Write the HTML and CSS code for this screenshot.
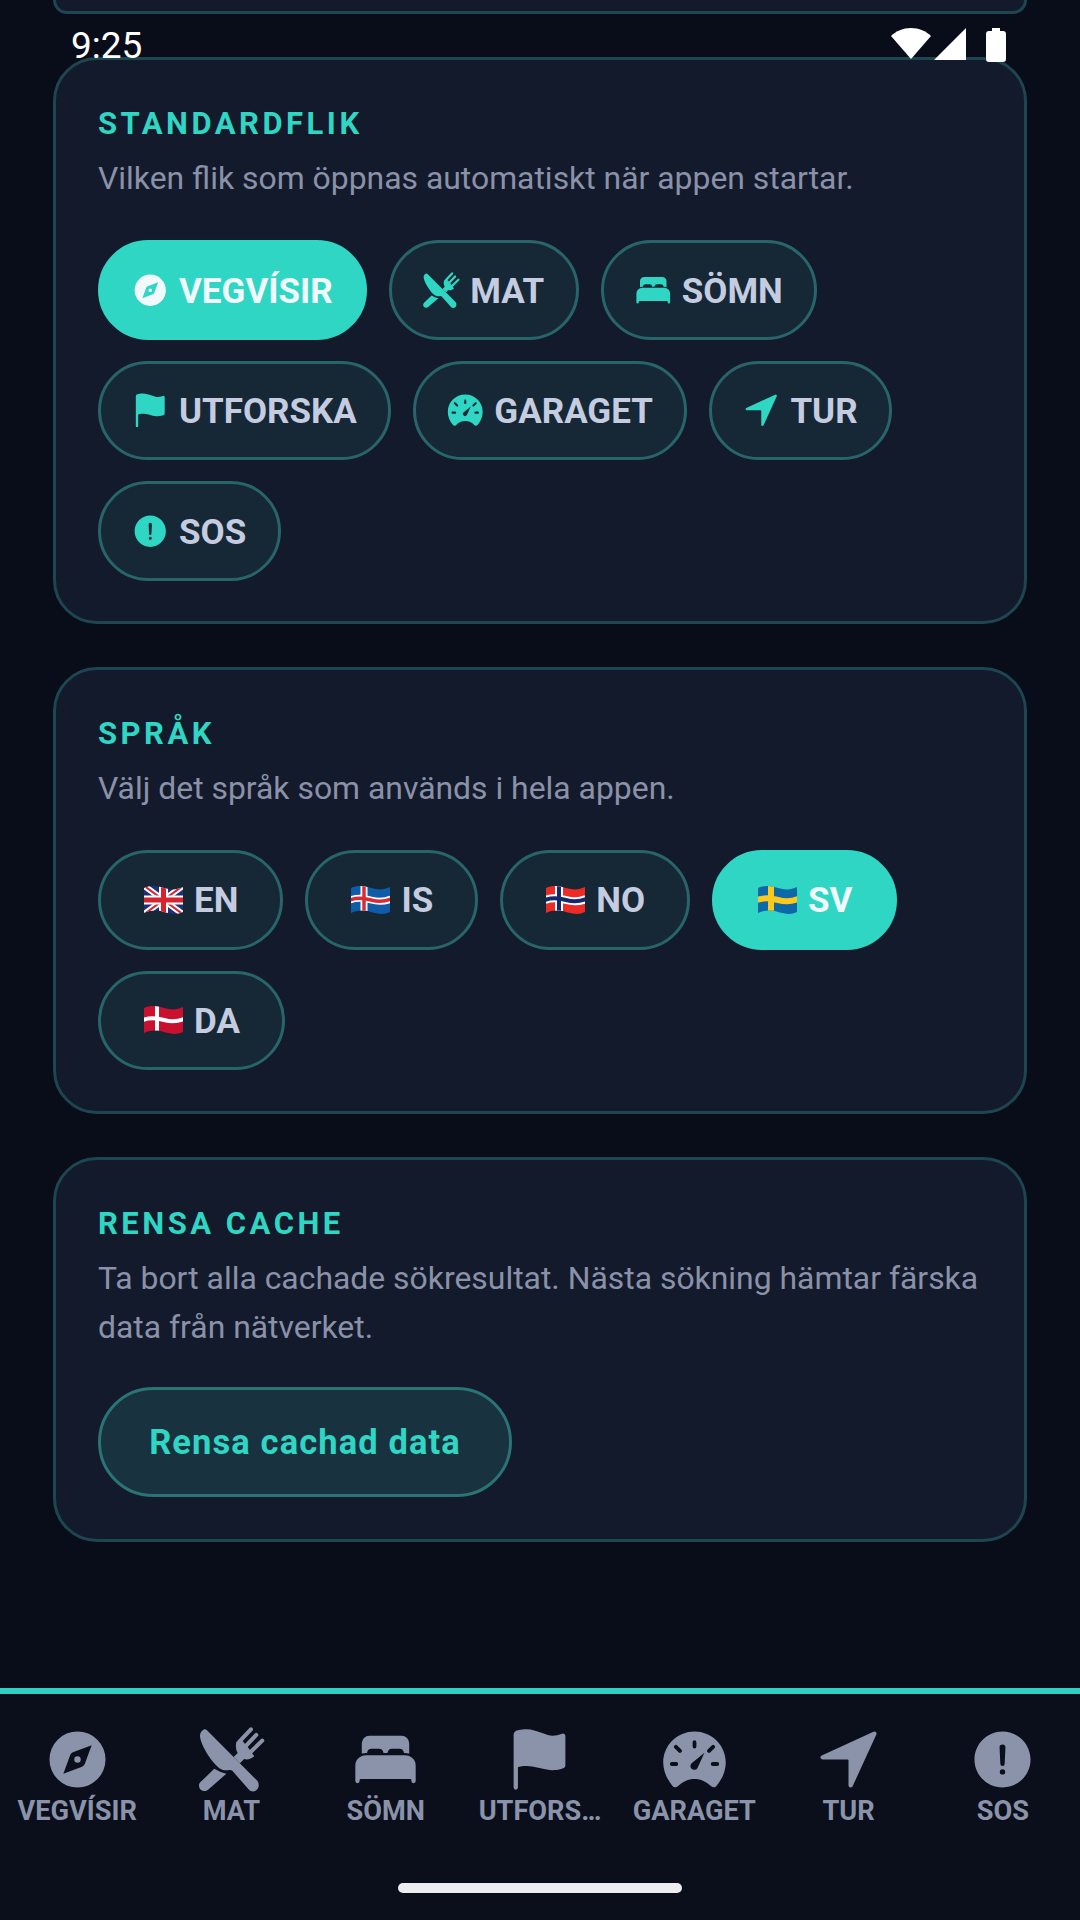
FILE: index.html
```html
<!DOCTYPE html>
<html lang="sv">
<head>
<meta charset="UTF-8">
<meta name="viewport" content="width=device-width, initial-scale=1.0">
<title>Inställningar</title>
<link rel="stylesheet" href="styles.css">
</head>
<body>
<!-- icon and flag sprites -->
<svg class="sprites" aria-hidden="true">
  <defs>
    <clipPath id="wave"><path d="M1 3C8 0 14 1 21 3S34 5 40 2V27C34 30 28 29 21 27S8 25 1 28Z"/></clipPath>
  </defs>
  <symbol id="i-compass" viewBox="0 0 512 512"><path fill-rule="evenodd" d="M256 48a208 208 0 1 0 0 416 208 208 0 0 0 0-416zM361 151L310 290Q304 304 290 310L151 361L202 222Q208 208 222 202ZM256 232a24 24 0 1 0 0 48 24 24 0 0 0 0-48z"/></symbol>
  <symbol id="i-food" viewBox="0 0 512 512">
    <path d="M46 36c8-6 20-5 28 3L446 412c16 18 16 48 0 66-16 18-44 20-60 2L262 340c-6-6-14-8-22-6-22 6-50 2-74-14C100 270 24 140 22 80c0-18 10-34 24-44z"/>
    <path d="M128 325Q172 352 218 362L82 480c-16 14-44 12-58-4-14-16-12-40 4-54z"/>
    <path d="M292 125C284 165 292 190 302 208L272 238L318 284L350 252C372 262 405 250 425 232L382 170L332 112Z"/>
    <path d="M316 122L400 32M356 162L440 74M396 202L484 116" fill="none" stroke="currentColor" stroke-width="30" stroke-linecap="round"/>
  </symbol>
  <symbol id="i-bed" viewBox="0 0 512 512"><path d="M432 230.7a79.44 79.44 0 0 0-32-6.7H112a79.51 79.51 0 0 0-32 6.69A80.09 80.09 0 0 0 32 304v112a16 16 0 0 0 32 0v-8a8.1 8.1 0 0 1 8-8h368a8.1 8.1 0 0 1 8 8v8a16 16 0 0 0 32 0V304a80.09 80.09 0 0 0-48-73.3zM376 80H136a56 56 0 0 0-56 56v72a4 4 0 0 0 5.12 3.84A95.5 95.5 0 0 1 112 208h4.23a4 4 0 0 0 4-3.55A32 32 0 0 1 152 176h56a32 32 0 0 1 31.8 28.45 4 4 0 0 0 4 3.55h24.46a4 4 0 0 0 4-3.55A32 32 0 0 1 304 176h56a32 32 0 0 1 31.8 28.45 4 4 0 0 0 4 3.55h4.23a95.51 95.51 0 0 1 26.85 3.84A4 4 0 0 0 432 208v-72a56 56 0 0 0-56-56z"/></symbol>
  <symbol id="i-flag" viewBox="0 0 512 512"><path d="M80 480a16 16 0 0 1-16-16V68.13a24 24 0 0 1 11.9-20.72C88 40.38 112.38 32 160 32c37.21 0 78.83 14.71 115.55 27.68C305.12 70.13 333.05 80 352 80a183.84 183.84 0 0 0 71-14.5 18 18 0 0 1 25 16.58v219.36a20 20 0 0 1-12 18.31c-8.71 3.81-40.51 16.25-84 16.25-24.14 0-54.38-7.14-86.39-14.71C229.63 312.79 192.43 304 160 304c-36.87 0-55.74 5.58-64 9.11V464a16 16 0 0 1-16 16z"/></symbol>
  <symbol id="i-gauge" viewBox="0 0 512 512"><path fill-rule="evenodd" d="M256 48C128 48 24 150 24 278C24 340 50 400 90 448C102 464 118 466 132 454C168 420 210 400 256 400C302 400 344 420 380 454C394 466 410 464 422 448C462 400 488 340 488 278C488 150 384 48 256 48ZM88 274h32a15 15 0 0 1 0 30h-32a15 15 0 0 1 0-30zM392 274h32a15 15 0 0 1 0 30h-32a15 15 0 0 1 0-30zM242 128a14 14 0 0 1 28 0v32a14 14 0 0 1-28 0zM108 172a14 14 0 0 1 20-20l30 30a14 14 0 0 1-20 20zM384 152a14 14 0 0 1 20 20l-30 30a14 14 0 0 1-20-20zM330 205L277 320a28 28 0 1 1-40-38Z"/></symbol>
  <symbol id="i-nav" viewBox="0 0 512 512"><path d="M272 464a16 16 0 0 1-16-16.42V264.13a8 8 0 0 0-8-8H64.41a16.31 16.31 0 0 1-15.49-10.65 16 16 0 0 1 8.41-19.87l384-176.15a16 16 0 0 1 21.22 21.19l-176 384A16 16 0 0 1 272 464z"/></symbol>
  <symbol id="i-alert" viewBox="0 0 512 512"><path fill-rule="evenodd" d="M256 48C141.31 48 48 141.31 48 256s93.31 208 208 208 208-93.31 208-208S370.69 48 256 48zm0 319.91a20 20 0 1 1 20-20 20 20 0 0 1-20 20zm21.72-201.15l-5.74 122a16 16 0 0 1-32 0l-5.74-121.94v-.05a21.74 21.74 0 1 1 43.44 0z"/></symbol>

  <symbol id="f-en" viewBox="0 0 41 30"><g clip-path="url(#wave)">
    <rect width="41" height="30" fill="#1f2f78"/>
    <path d="M0 0L41 30M41 0L0 30" stroke="#fff" stroke-width="6"/>
    <path d="M0 0L41 30M41 0L0 30" stroke="#d8232f" stroke-width="2"/>
    <path d="M20.5 0V30M0 15H41" stroke="#fff" stroke-width="9"/>
    <path d="M20.5 0V30M0 15H41" stroke="#d8232f" stroke-width="5"/>
  </g></symbol>
  <symbol id="f-is" viewBox="0 0 41 30"><g clip-path="url(#wave)">
    <rect width="41" height="30" fill="#0f5ca8"/>
    <path d="M14 0V30M0 15C8 12 14 13 21 15S34 17 41 14" fill="none" stroke="#fff" stroke-width="7"/>
    <path d="M14 0V30M0 15C8 12 14 13 21 15S34 17 41 14" fill="none" stroke="#dc2a35" stroke-width="3.5"/>
  </g></symbol>
  <symbol id="f-no" viewBox="0 0 41 30"><g clip-path="url(#wave)">
    <rect width="41" height="30" fill="#ec2b27"/>
    <path d="M14 0V30M0 15C8 12 14 13 21 15S34 17 41 14" fill="none" stroke="#fff" stroke-width="8"/>
    <path d="M14 0V30M0 15C8 12 14 13 21 15S34 17 41 14" fill="none" stroke="#14296b" stroke-width="4"/>
  </g></symbol>
  <symbol id="f-sv" viewBox="0 0 41 30"><g clip-path="url(#wave)">
    <rect width="41" height="30" fill="#0c68a6"/>
    <path d="M14 0V30M0 15C8 12 14 13 21 15S34 17 41 14" fill="none" stroke="#fcc81e" stroke-width="6"/>
  </g></symbol>
  <symbol id="f-da" viewBox="0 0 41 30"><g clip-path="url(#wave)">
    <rect width="41" height="30" fill="#c9112f"/>
    <path d="M14 0V30M0 15C8 12 14 13 21 15S34 17 41 14" fill="none" stroke="#fff" stroke-width="4"/>
  </g></symbol>
</svg>

<div class="screen">
  <!-- status bar sits over the scrolled content -->
  <div class="statusbar">
    <span class="clock">9:25</span>
    <span class="status-icons">
      <svg class="st-wifi" viewBox="0 0 40 31"><path d="M20 31L0 8C5 3 12 0 20 0S35 3 40 8Z"/></svg>
      <svg class="st-signal" viewBox="0 0 32 32"><path d="M32 0V32H0Z"/></svg>
      <svg class="st-battery" viewBox="0 0 20 34"><path d="M6 0h8v3h3a3 3 0 0 1 3 3v25a3 3 0 0 1-3 3H3a3 3 0 0 1-3-3V6a3 3 0 0 1 3-3h3Z"/></svg>
    </span>
  </div>

  <main class="content">
    <div class="card card-stub"></div>

    <section class="card">
      <h2 class="card-title">STANDARDFLIK</h2>
      <p class="card-text">Vilken flik som öppnas automatiskt när appen startar.</p>
      <div class="chips">
        <div class="chip chip-active"><svg class="chip-icon"><use href="#i-compass"/></svg>VEGVÍSIR</div>
        <div class="chip"><svg class="chip-icon"><use href="#i-food"/></svg>MAT</div>
        <div class="chip"><svg class="chip-icon"><use href="#i-bed"/></svg>SÖMN</div>
        <div class="chip"><svg class="chip-icon"><use href="#i-flag"/></svg>UTFORSKA</div>
        <div class="chip"><svg class="chip-icon"><use href="#i-gauge"/></svg>GARAGET</div>
        <div class="chip"><svg class="chip-icon"><use href="#i-nav"/></svg>TUR</div>
        <div class="chip"><svg class="chip-icon"><use href="#i-alert"/></svg>SOS</div>
      </div>
    </section>

    <section class="card">
      <h2 class="card-title">SPRÅK</h2>
      <p class="card-text">Välj det språk som används i hela appen.</p>
      <div class="chips">
        <div class="chip chip-lang"><svg class="flag"><use href="#f-en"/></svg>EN</div>
        <div class="chip chip-lang"><svg class="flag"><use href="#f-is"/></svg>IS</div>
        <div class="chip chip-lang"><svg class="flag"><use href="#f-no"/></svg>NO</div>
        <div class="chip chip-lang chip-active"><svg class="flag"><use href="#f-sv"/></svg>SV</div>
        <div class="chip chip-lang"><svg class="flag"><use href="#f-da"/></svg>DA</div>
      </div>
    </section>

    <section class="card">
      <h2 class="card-title">RENSA CACHE</h2>
      <p class="card-text">Ta bort alla cachade sökresultat. Nästa sökning hämtar färska data från nätverket.</p>
      <div class="clear-btn">Rensa cachad data</div>
    </section>
  </main>

  <nav class="tabbar">
    <div class="tab"><svg class="tab-icon"><use href="#i-compass"/></svg><span>VEGVÍSIR</span></div>
    <div class="tab"><svg class="tab-icon"><use href="#i-food"/></svg><span>MAT</span></div>
    <div class="tab"><svg class="tab-icon"><use href="#i-bed"/></svg><span>SÖMN</span></div>
    <div class="tab"><svg class="tab-icon"><use href="#i-flag"/></svg><span>UTFORS…</span></div>
    <div class="tab"><svg class="tab-icon"><use href="#i-gauge"/></svg><span>GARAGET</span></div>
    <div class="tab"><svg class="tab-icon"><use href="#i-nav"/></svg><span>TUR</span></div>
    <div class="tab"><svg class="tab-icon"><use href="#i-alert"/></svg><span>SOS</span></div>
    <div class="home-bar"></div>
  </nav>
</div>
</body>
</html>
```
FILE: styles.css
```css
body {
    margin: 0;
    background-color: #090d19;
    font-family: Roboto, "Liberation Sans", sans-serif;
}
.sprites {
    position: absolute;
    width: 0;
    height: 0;
}
.screen {
    position: relative;
    width: 1080px;
    height: 1920px;
    overflow: hidden;
    display: flex;
    flex-direction: column;
}

/* status bar */
.statusbar {
    position: absolute;
    top: 0;
    left: 0;
    right: 0;
    height: 92px;
}
.clock {
    position: absolute;
    left: 71px;
    top: 25px;
    font-size: 37px;
    line-height: 42px;
    color: #fff;
}
.status-icons svg {
    position: absolute;
    fill: #fff;
}
.st-wifi { left: 891px; top: 28px; width: 40px; height: 31px; }
.st-signal { left: 934px; top: 28px; width: 32px; height: 32px; }
.st-battery { left: 986px; top: 28px; width: 20px; height: 34px; }

/* scrolled settings */
.content {
    flex: 1;
    display: flex;
    flex-direction: column;
    gap: 43px;
    padding: 0 53px;
}
.card {
    box-sizing: border-box;
    background-color: #131a2b;
    border: 3px solid #1d4650;
    border-radius: 44px;
    padding: 41px 42px 40.5px;
}
.card-stub {
    height: 14px;
    padding: 0;
    border-top: none;
    border-radius: 0 0 44px 44px;
}
.card-title {
    margin: 0 0 7px;
    font-size: 31px;
    line-height: 46px;
    font-weight: 700;
    letter-spacing: 3.5px;
    color: #2fd6c4;
}
.card-text {
    margin: 0;
    font-size: 31.9px;
    line-height: 49.5px;
    color: #8a91a8;
}
.chips {
    display: flex;
    flex-wrap: wrap;
    gap: 21px 22px;
    margin-top: 36.5px;
}
.chip {
    box-sizing: border-box;
    height: 99.5px;
    display: flex;
    align-items: center;
    gap: 9.5px;
    padding: 3px 31.5px 0 30px;
    background-color: #162836;
    border: 3px solid #28656a;
    border-radius: 50px;
    font-size: 35px;
    font-weight: 700;
    color: #c5cce0;
}
.chip-lang {
    padding: 2px 42px 0;
    gap: 10px;
}
.chip-icon {
    width: 38.5px;
    height: 38.5px;
    margin-top: -3px;
    fill: #2fd6c4;
    color: #2fd6c4;
}
.flag {
    width: 41px;
    height: 30px;
    margin-top: -2px;
}
.chip-active {
    background-color: #2fd6c4;
    border-color: #2fd6c4;
    color: #f2f9fd;
}
.chip-active .chip-icon {
    fill: #f2f9fd;
    color: #f2f9fd;
}
.clear-btn {
    box-sizing: border-box;
    width: 414px;
    height: 110px;
    margin: 34px 0 2px;
    display: flex;
    align-items: center;
    justify-content: center;
    background-color: #18323f;
    border: 3px solid #2a7376;
    border-radius: 55px;
    font-size: 34.5px;
    font-weight: 700;
    letter-spacing: 1.1px;
    color: #2fd6c4;
}

/* bottom tabs */
.tabbar {
    position: relative;
    box-sizing: border-box;
    height: 232px;
    padding-top: 30.5px;
    display: grid;
    grid-template-columns: repeat(7, 1fr);
    align-items: start;
    background-color: #0b0f1b;
    border-top: 6px solid #2fd0c2;
}
.tab {
    display: flex;
    flex-direction: column;
    align-items: center;
    font-size: 27.2px;
    line-height: 36px;
    font-weight: 700;
    color: #8a93a9;
}
.tab span {
    margin-top: -1px;
}
.tab-icon {
    width: 69px;
    height: 69px;
    fill: #8a93a9;
    color: #8a93a9;
}
.home-bar {
    position: absolute;
    left: 398px;
    bottom: 27px;
    width: 284px;
    height: 10px;
    border-radius: 5px;
    background-color: #eeeeee;
}
```
